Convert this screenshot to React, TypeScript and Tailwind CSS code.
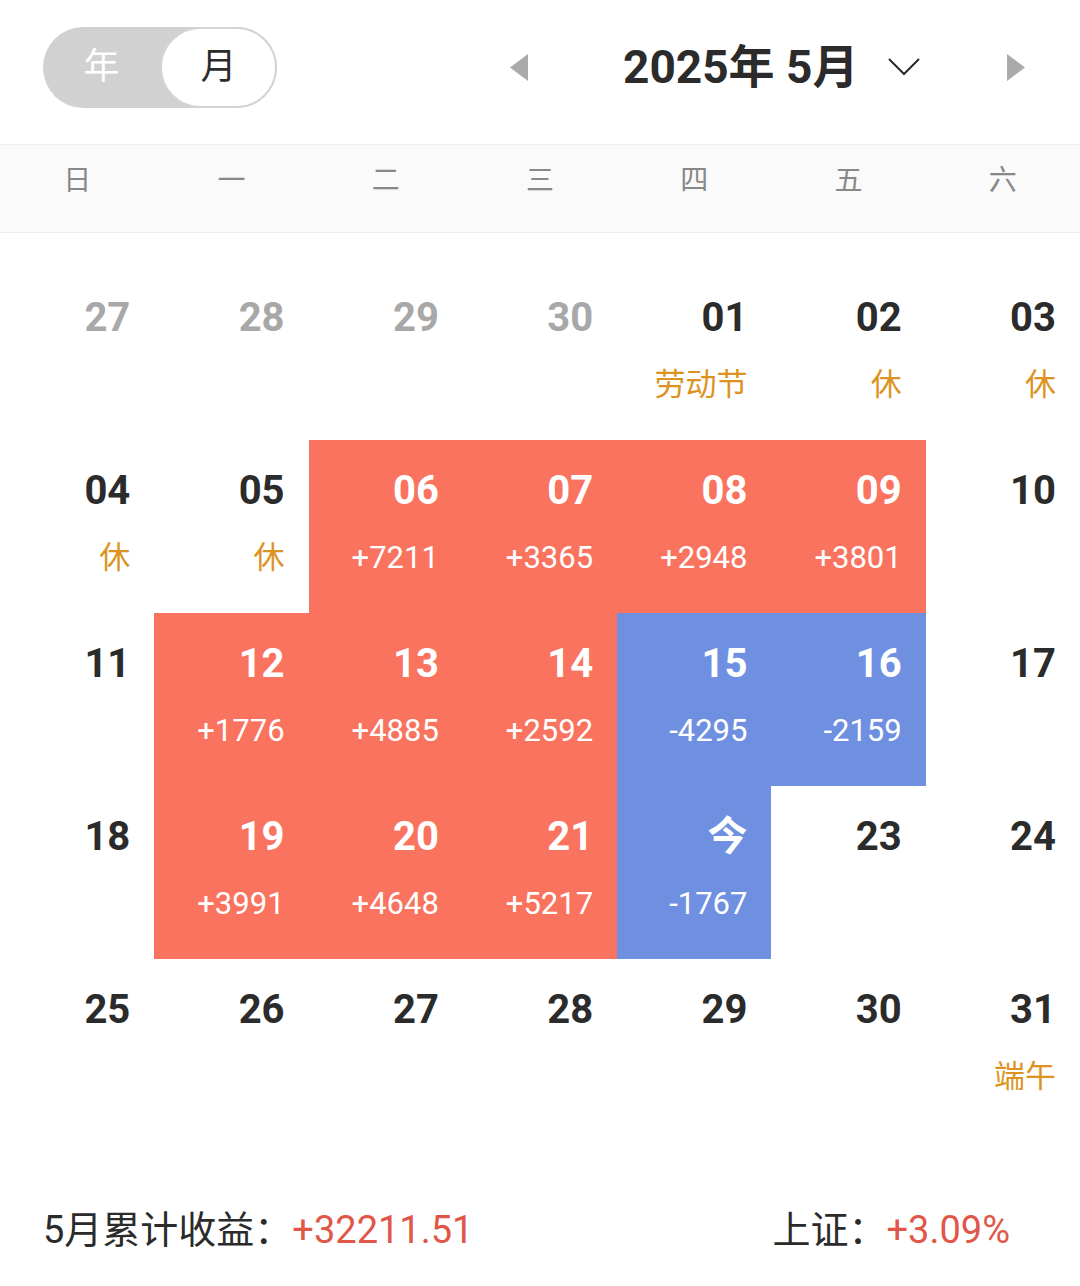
import React from "react";

type Day = {
  d: string;
  muted?: boolean;
  sub?: string;
  tone?: "up" | "down";
  holiday?: boolean;
};

const weekdays = ["日", "一", "二", "三", "四", "五", "六"];

const days: Day[] = [
  { d: "27", muted: true },
  { d: "28", muted: true },
  { d: "29", muted: true },
  { d: "30", muted: true },
  { d: "01", sub: "劳动节", holiday: true },
  { d: "02", sub: "休", holiday: true },
  { d: "03", sub: "休", holiday: true },
  { d: "04", sub: "休", holiday: true },
  { d: "05", sub: "休", holiday: true },
  { d: "06", sub: "+7211", tone: "up" },
  { d: "07", sub: "+3365", tone: "up" },
  { d: "08", sub: "+2948", tone: "up" },
  { d: "09", sub: "+3801", tone: "up" },
  { d: "10" },
  { d: "11" },
  { d: "12", sub: "+1776", tone: "up" },
  { d: "13", sub: "+4885", tone: "up" },
  { d: "14", sub: "+2592", tone: "up" },
  { d: "15", sub: "-4295", tone: "down" },
  { d: "16", sub: "-2159", tone: "down" },
  { d: "17" },
  { d: "18" },
  { d: "19", sub: "+3991", tone: "up" },
  { d: "20", sub: "+4648", tone: "up" },
  { d: "21", sub: "+5217", tone: "up" },
  { d: "今", sub: "-1767", tone: "down" },
  { d: "23" },
  { d: "24" },
  { d: "25" },
  { d: "26" },
  { d: "27" },
  { d: "28" },
  { d: "29" },
  { d: "30" },
  { d: "31", sub: "端午", holiday: true },
];

const Cell = ({ day }: { day: Day }) => {
  const bg =
    day.tone === "up" ? "bg-[#f9735f]" : day.tone === "down" ? "bg-[#6f90e0]" : "bg-white";
  const numColor = day.tone ? "text-white" : day.muted ? "text-[#a8a8a8]" : "text-[#2b2b2b]";
  const subColor = day.holiday ? "text-[#dc9322]" : "text-white";
  return (
    <div className={`h-[173px] flex flex-col items-end pr-[24px] pt-[29px] ${bg}`}>
      <span className={`text-[40px] leading-[44px] font-bold ${numColor}`}>{day.d}</span>
      {day.sub && (
        <span className={`mt-[27px] text-[31px] leading-[36px] ${subColor}`}>{day.sub}</span>
      )}
    </div>
  );
};

export default function App() {
  return (
    <div className="w-[1080px] h-[1286px] bg-white font-['Roboto','Noto_Sans_CJK_SC',sans-serif] overflow-hidden">
      {/* Header */}
      <div className="h-[144px] flex items-center px-[43px] pb-[10px]">
        <div className="w-[234px] h-[81px] rounded-full bg-[#d1d1d1] flex items-center">
          <div className="w-[117px] text-center text-[36px] text-white">年</div>
          <div className="w-[117px] h-full rounded-full bg-white border-2 border-[#d4d4d4] flex items-center justify-center text-[36px] text-[#2b2b2b]">
            月
          </div>
        </div>
        <svg className="ml-[233px]" width="18" height="27" viewBox="0 0 18 27">
          <polygon points="18,0 0,13.5 18,27" fill="#aaaaaa" />
        </svg>
        <div className="ml-[95px] text-[46px] leading-none font-bold text-[#2b2b2b] whitespace-nowrap">
          2025年 5月
        </div>
        <svg className="ml-[30px]" width="32" height="20" viewBox="0 0 32 20">
          <polyline points="1,2 16,17 31,2" fill="none" stroke="#2b2b2b" strokeWidth="2" />
        </svg>
        <svg className="ml-[87px]" width="18" height="27" viewBox="0 0 18 27">
          <polygon points="0,0 18,13.5 0,27" fill="#aaaaaa" />
        </svg>
      </div>

      {/* Weekdays */}
      <div className="h-[89px] grid grid-cols-7 items-center pb-[16px] bg-[#fafafa] border-y border-[#eeeeee]">
        {weekdays.map((w) => (
          <div key={w} className="text-center text-[28px] text-[#888888]">
            {w}
          </div>
        ))}
      </div>

      {/* Days */}
      <div className="mt-[34px] grid grid-cols-7">
        {days.map((day, i) => (
          <Cell key={i} day={day} />
        ))}
      </div>

      {/* Footer */}
      <div className="mt-[74px] flex items-center justify-between pl-[43px] pr-[70px] text-[38px] leading-[48px]">
        <div className="text-[#2b2b2b]">
          5月累计收益：<span className="text-[#e0574a]">+32211.51</span>
        </div>
        <div className="text-[#2b2b2b]">
          上证：<span className="text-[#e0574a]">+3.09%</span>
        </div>
      </div>
    </div>
  );
}
